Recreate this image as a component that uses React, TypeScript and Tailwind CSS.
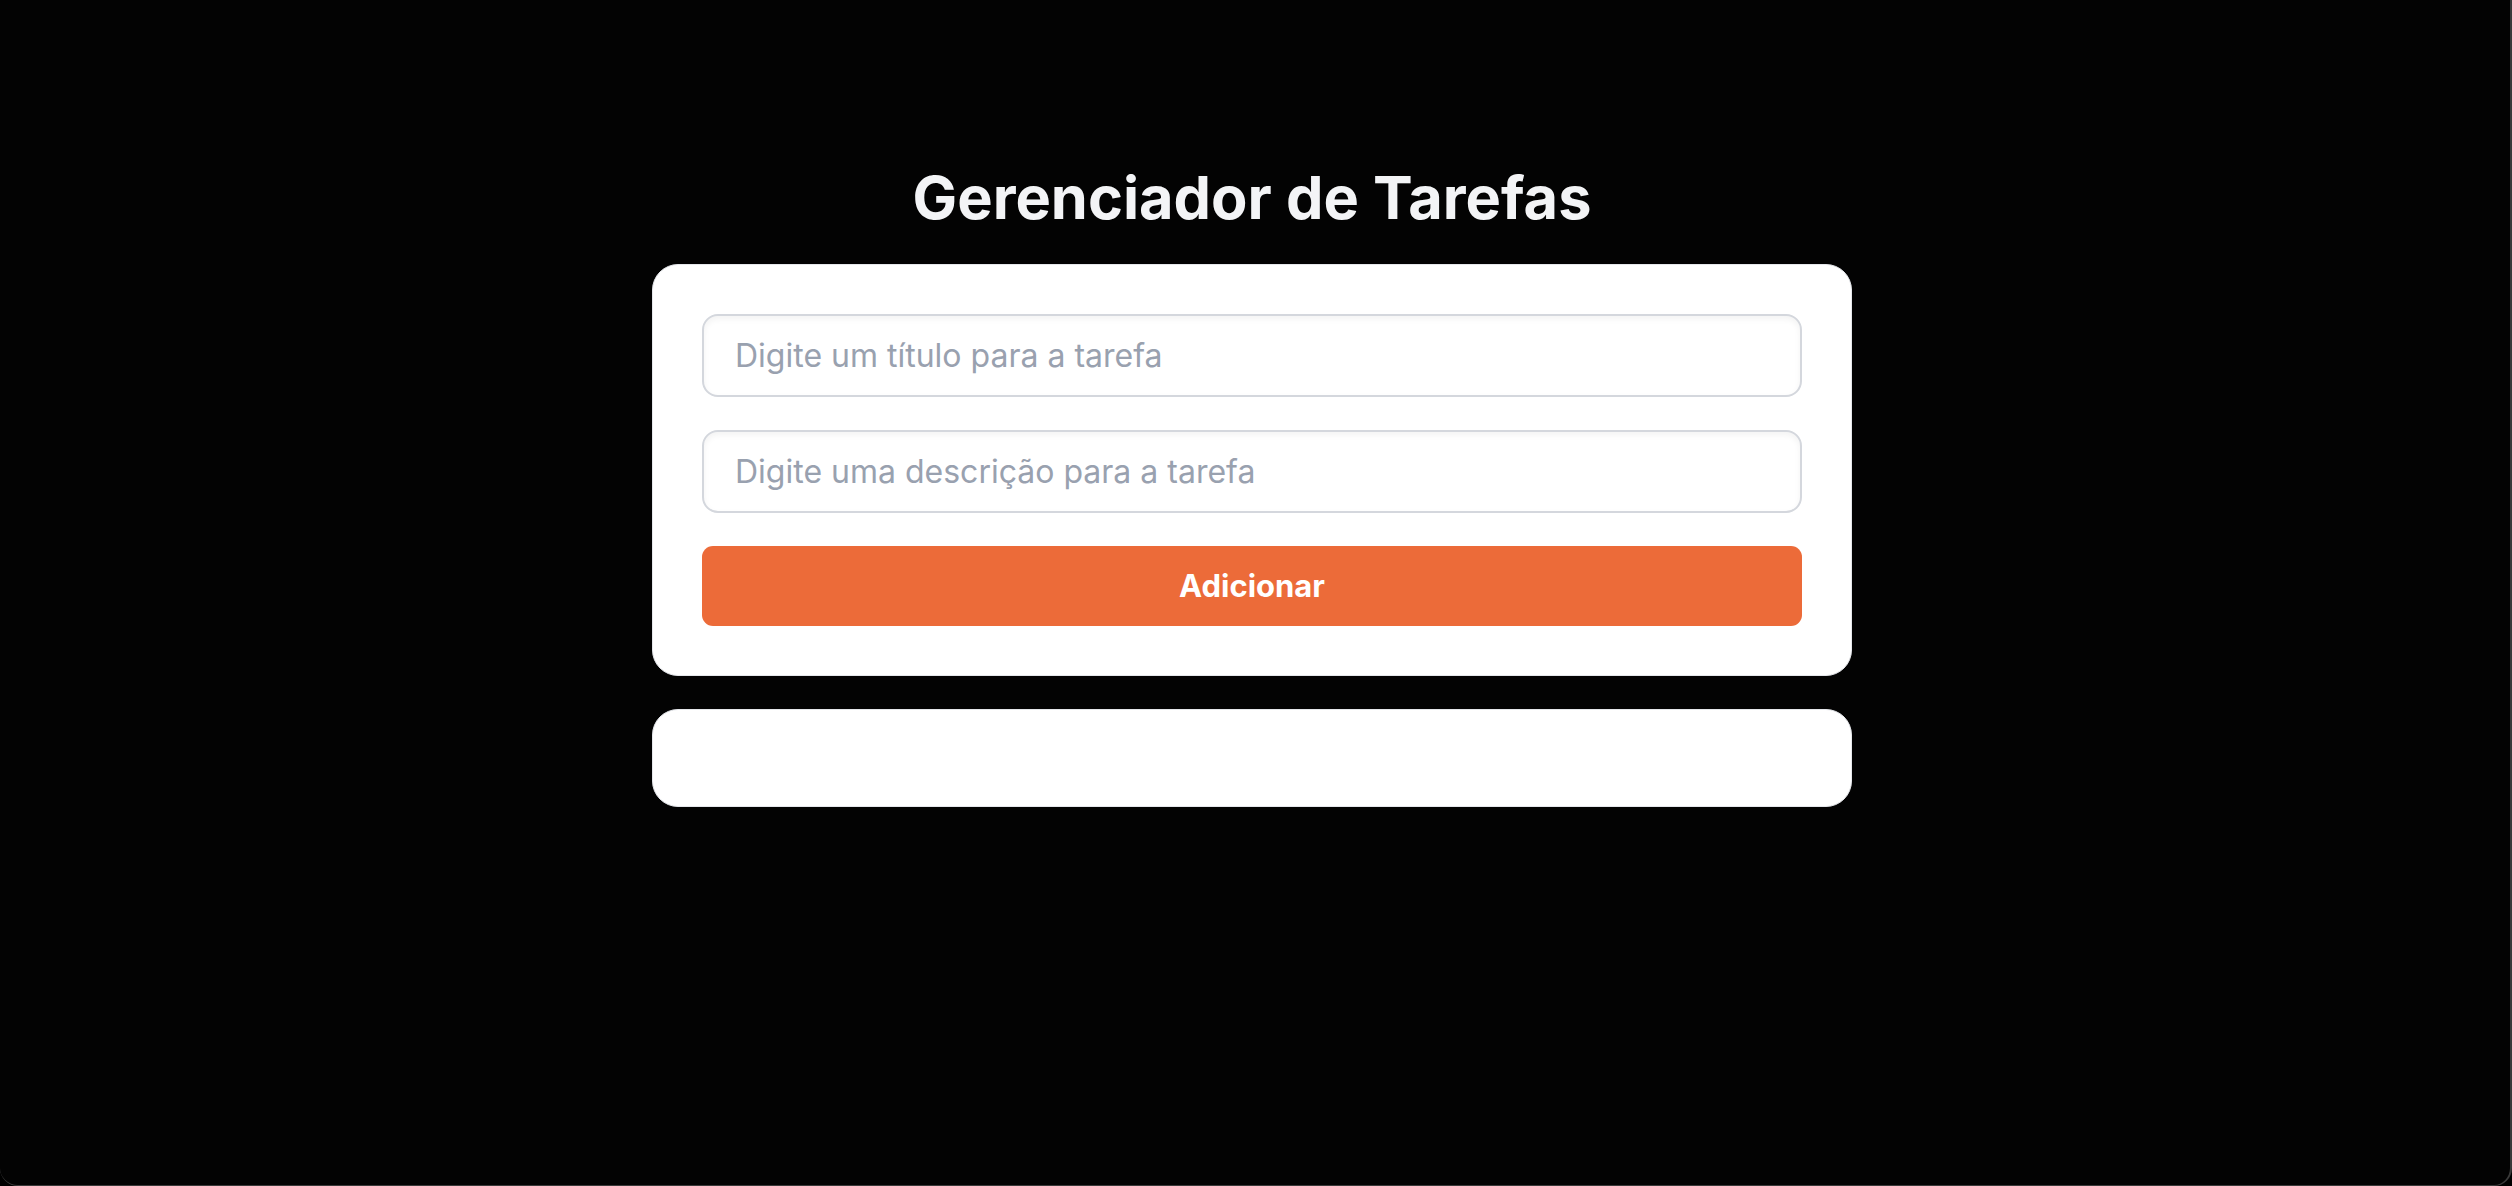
import React from "react";

export default function App() {
  return (
    <div className="w-full h-[1186px] bg-black">
      <div
        className="w-full h-full bg-[#030303] border-r-2 border-b border-[#3a3a3a] rounded-b-[18px] flex flex-col items-center pt-[167px] pr-[6px]"
        style={{ fontFamily: "Inter, 'Noto Sans', sans-serif" }}
      >
        <h1 className="text-[59.5px] leading-[60px] font-bold text-[#f3f4f6] mb-[37px]">
          Gerenciador de Tarefas
        </h1>
        <div className="w-[1200px] bg-white rounded-[26px] border border-gray-200 p-[49px] flex flex-col">
          <input
            className="h-[83px] w-full rounded-[16px] border-2 border-[#d4d7dd] px-[31px] text-[32px] text-gray-700 placeholder:text-[#99a1af] outline-none shadow-[inset_0_3px_6px_rgba(0,0,0,0.05)]"
            placeholder="Digite um título para a tarefa"
          />
          <input
            className="mt-[33px] h-[83px] w-full rounded-[16px] border-2 border-[#d4d7dd] px-[31px] text-[32px] text-gray-700 placeholder:text-[#99a1af] outline-none shadow-[inset_0_3px_6px_rgba(0,0,0,0.05)]"
            placeholder="Digite uma descrição para a tarefa"
          />
          <button className="mt-[33px] h-[80px] w-full rounded-[11px] bg-[#ec6b39] text-white text-[31px] font-bold">
            Adicionar
          </button>
        </div>
        <div className="mt-[33px] w-[1200px] h-[98px] bg-white rounded-[26px] border border-gray-200" />
      </div>
    </div>
  );
}
